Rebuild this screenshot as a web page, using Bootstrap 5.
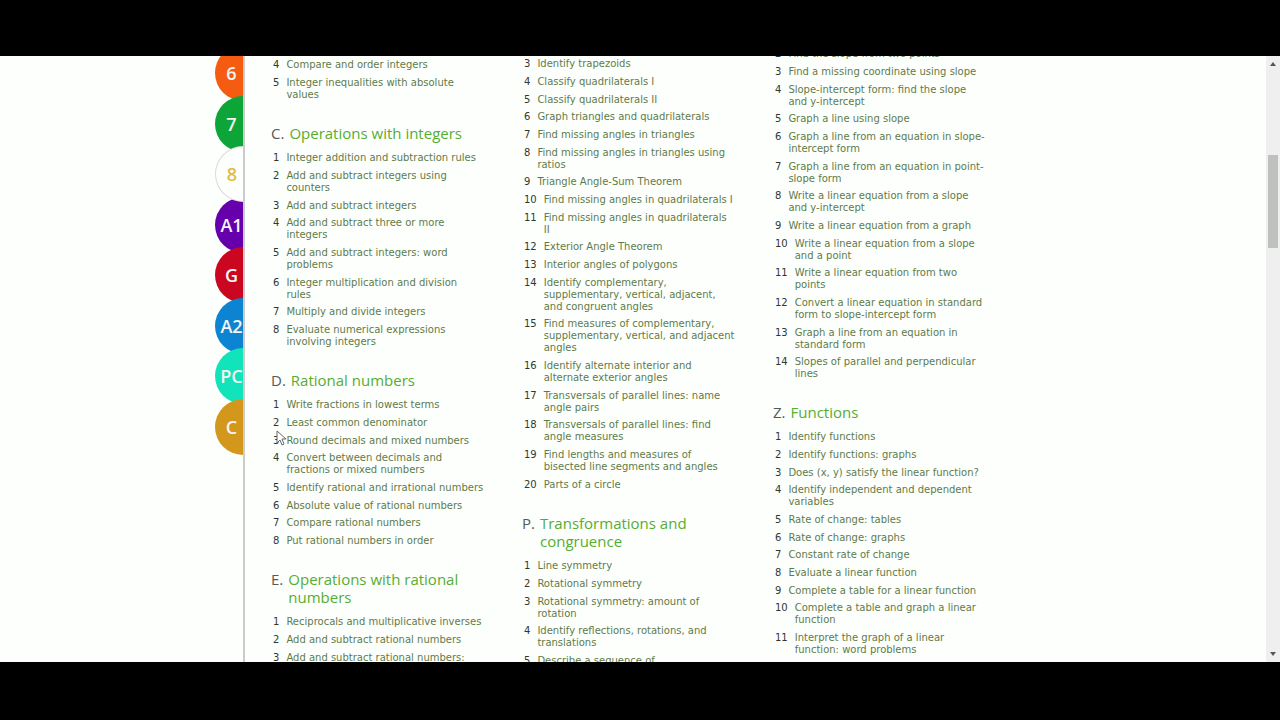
<!DOCTYPE html>
<html lang="en">
<head>
<meta charset="utf-8">
<meta name="viewport" content="width=device-width, initial-scale=1">
<title>Eighth grade math skills</title>
<link href="https://cdn.jsdelivr.net/npm/bootstrap@5.3.0/dist/css/bootstrap.min.css" rel="stylesheet">
<style>
body { font-family: "DejaVu Sans", Verdana, sans-serif; font-size: 10px; line-height: 12px; background: #000; }
.bar-top { height: 56px; }
.bar-bottom { height: 58px; }
.view { background: #fdfffd; min-height: 0; }
.sheet { max-width: 836px; }
.grades { width: 28px; margin-top: -11px; }
.grade { height: 56px; margin-bottom: -6px; padding-left: 5px; border-radius: 28px 0 0 28px; color: #f4f4f4; font: 600 18px/56px "Open Sans", "Trebuchet MS", sans-serif; white-space: nowrap; }
.grade:nth-child(odd) { margin-bottom: -5px; }
.grade.current { z-index: 1; background: #fdfffd; border: 1px solid #d8dcd8; border-right: 0; color: #e0bd3c; line-height: 54px; }
.g6 { background: #f55c12; } .g7 { background: #0ea538; } .ga1 { background: #6500ac; } .gg { background: #cb0620; }
.ga2 { background: #0d84d2; } .gpc { background: #11e3bb; } .gc { background: #d3971b; }
.panel { border-left: 2px solid #cbcccb; padding-left: 26px; }
.skills { width: 251px; padding-right: 36px; }
.skills-a { padding-top: 3px; } .skills-b { padding-top: 2px; } .skills-c { margin-top: -8px; }
.skills h2 { font: 500 15px/18px "Open Sans", "Trebuchet MS", sans-serif; margin: 23px 0 10px; color: #56ad2f; gap: 5px; }
.skills h2 span { color: #555a58; }
.skills ol { padding-left: 2px; }
.skills li { margin-bottom: 6px; gap: 7px; color: #303730; }
.skills li:nth-child(3n) { margin-bottom: 5px; }
.skills li:last-child { margin-bottom: 0; }
.skills li a { color: #5d7b4a; }
.scroller { width: 14px; background: #efefef; padding: 5px 2px; }
.scroller button { height: 6px; line-height: 0; }
.thumb { height: 93px; margin-top: 88px; background: #bfc1bf; }
.pointer { left: 61px; top: 374px; z-index: 2; }
</style>
</head>
<body class="vh-100 d-flex flex-column overflow-hidden">
<div class="bar-top flex-shrink-0"></div>
<div class="view flex-fill d-flex overflow-hidden">
<main class="flex-fill">
<div class="sheet h-100 mx-auto d-flex position-relative">
<nav class="grades d-flex flex-column flex-shrink-0 text-center" aria-label="Grades">
<a href="#" class="grade g6 flex-shrink-0 text-decoration-none">6</a>
<a href="#" class="grade g7 flex-shrink-0 text-decoration-none">7</a>
<a href="#" class="grade current flex-shrink-0 text-decoration-none position-relative">8</a>
<a href="#" class="grade ga1 flex-shrink-0 text-decoration-none">A1</a>
<a href="#" class="grade gg flex-shrink-0 text-decoration-none">G</a>
<a href="#" class="grade ga2 flex-shrink-0 text-decoration-none">A2</a>
<a href="#" class="grade gpc flex-shrink-0 text-decoration-none">PC</a>
<a href="#" class="grade gc flex-shrink-0 text-decoration-none">C</a>
</nav>
<div class="panel flex-fill d-flex align-items-start">
<section class="skills skills-a flex-shrink-0">
<ol class="list-unstyled m-0" data-start="4">
<li>Compare and order integers</li>
<li>Integer inequalities with absolute values</li>
</ol>
<h2 class="d-flex" data-letter="C">Operations with integers</h2>
<ol class="list-unstyled m-0">
<li>Integer addition and subtraction rules</li>
<li>Add and subtract integers using counters</li>
<li>Add and subtract integers</li>
<li>Add and subtract three or more integers</li>
<li>Add and subtract integers: word problems</li>
<li>Integer multiplication and division<br>rules</li>
<li>Multiply and divide integers</li>
<li>Evaluate numerical expressions involving integers</li>
</ol>
<h2 class="d-flex" data-letter="D">Rational numbers</h2>
<ol class="list-unstyled m-0">
<li>Write fractions in lowest terms</li>
<li>Least common denominator</li>
<li>Round decimals and mixed numbers</li>
<li>Convert between decimals and fractions or mixed numbers</li>
<li>Identify rational and irrational numbers</li>
<li>Absolute value of rational numbers</li>
<li>Compare rational numbers</li>
<li>Put rational numbers in order</li>
</ol>
<h2 class="d-flex" data-letter="E">Operations with rational numbers</h2>
<ol class="list-unstyled m-0">
<li>Reciprocals and multiplicative inverses</li>
<li>Add and subtract rational numbers</li>
<li>Add and subtract rational numbers: word problems</li>
</ol>
</section>
<section class="skills skills-b flex-shrink-0">
<ol class="list-unstyled m-0" data-start="3">
<li>Identify trapezoids</li>
<li>Classify quadrilaterals I</li>
<li>Classify quadrilaterals II</li>
<li>Graph triangles and quadrilaterals</li>
<li>Find missing angles in triangles</li>
<li>Find missing angles in triangles using ratios</li>
<li>Triangle Angle-Sum Theorem</li>
<li>Find missing angles in quadrilaterals I</li>
<li>Find missing angles in quadrilaterals<br>II</li>
<li>Exterior Angle Theorem</li>
<li>Interior angles of polygons</li>
<li>Identify complementary, supplementary, vertical, adjacent, and congruent angles</li>
<li>Find measures of complementary, supplementary, vertical, and adjacent angles</li>
<li>Identify alternate interior and alternate exterior angles</li>
<li>Transversals of parallel lines: name angle pairs</li>
<li>Transversals of parallel lines: find angle measures</li>
<li>Find lengths and measures of<br>bisected line segments and angles</li>
<li>Parts of a circle</li>
</ol>
<h2 class="d-flex" data-letter="P">Transformations and congruence</h2>
<ol class="list-unstyled m-0">
<li>Line symmetry</li>
<li>Rotational symmetry</li>
<li>Rotational symmetry: amount of rotation</li>
<li>Identify reflections, rotations, and translations</li>
<li>Describe a sequence of transformations</li>
</ol>
</section>
<section class="skills skills-c flex-shrink-0">
<ol class="list-unstyled m-0" data-start="2">
<li>Find the slope from two points</li>
<li>Find a missing coordinate using slope</li>
<li>Slope-intercept form: find the slope and y-intercept</li>
<li>Graph a line using slope</li>
<li>Graph a line from an equation in slope-intercept form</li>
<li>Graph a line from an equation in point-slope form</li>
<li>Write a linear equation from a slope and y-intercept</li>
<li>Write a linear equation from a graph</li>
<li>Write a linear equation from a slope and a point</li>
<li>Write a linear equation from two points</li>
<li>Convert a linear equation in standard form to slope-intercept form</li>
<li>Graph a line from an equation in standard form</li>
<li>Slopes of parallel and perpendicular lines</li>
</ol>
<h2 class="d-flex" data-letter="Z">Functions</h2>
<ol class="list-unstyled m-0">
<li>Identify functions</li>
<li>Identify functions: graphs</li>
<li>Does (x, y) satisfy the linear function?</li>
<li>Identify independent and dependent variables</li>
<li>Rate of change: tables</li>
<li>Rate of change: graphs</li>
<li>Constant rate of change</li>
<li>Evaluate a linear function</li>
<li>Complete a table for a linear function</li>
<li>Complete a table and graph a linear function</li>
<li>Interpret the graph of a linear function: word problems</li>
</ol>
</section>
</div>
<svg class="pointer position-absolute" width="12" height="18" viewBox="0 0 12 18" aria-hidden="true"><path d="M1 1v12l3-3 2 5 2-1-2-5h4z" fill="#fff" stroke="#666" stroke-width="1"/></svg>
</div>
</main>
<div class="scroller d-flex flex-column flex-shrink-0">
<button class="btn p-0 border-0" aria-label="Scroll up"><svg width="6" height="4" viewBox="0 0 6 4"><path d="M0 4l3-4 3 4z" fill="#555"/></svg></button>
<div class="thumb"></div>
<button class="btn p-0 border-0 mt-auto" aria-label="Scroll down"><svg width="6" height="4" viewBox="0 0 6 4"><path d="M0 0l3 4 3-4z" fill="#555"/></svg></button>
</div>
</div>
<div class="bar-bottom flex-shrink-0"></div>
<script src="https://cdn.jsdelivr.net/npm/bootstrap@5.3.0/dist/js/bootstrap.bundle.min.js"></script>
<script>
// Number each skill and turn its title into a link.
document.querySelectorAll('.skills ol').forEach(function (list) {
  var n = Number(list.dataset.start || 1);
  list.querySelectorAll('li').forEach(function (item) {
    var title = item.innerHTML;
    item.className = 'd-flex';
    item.innerHTML = '<span>' + n++ + '</span><a href="#" class="text-decoration-none">' + title + '</a>';
  });
});
document.querySelectorAll('.skills h2').forEach(function (head) {
  head.innerHTML = '<span>' + head.dataset.letter + '.</span><div>' + head.textContent + '</div>';
});
</script>
</body>
</html>
